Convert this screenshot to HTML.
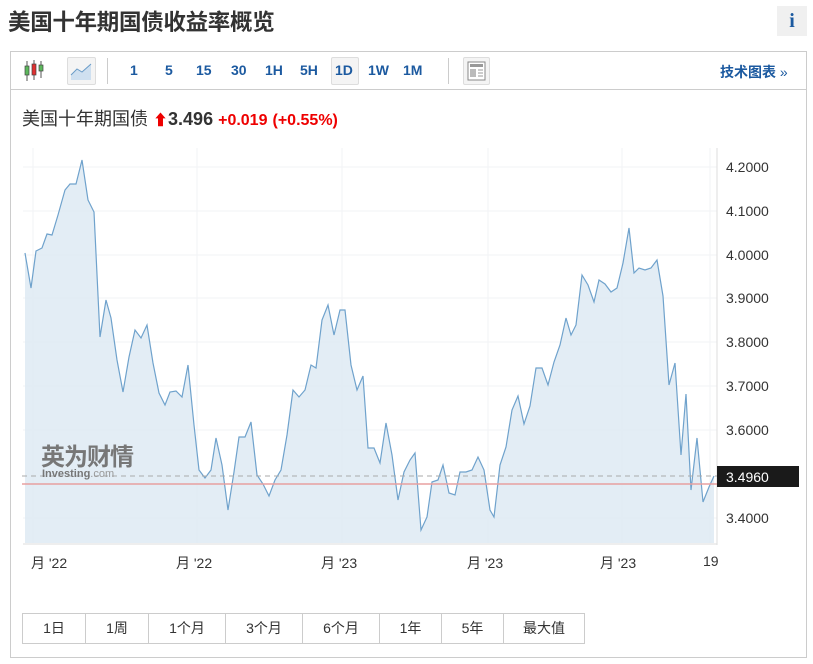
<!DOCTYPE html>
<html><head><meta charset="utf-8"><style>
body{margin:0;width:813px;height:664px;background:#fff;font-family:"Liberation Sans","Noto Sans CJK SC",sans-serif;position:relative;overflow:hidden}
.a{position:absolute}
h1{position:absolute;left:8px;top:5px;margin:0;font-size:22.5px;font-weight:bold;color:#333;letter-spacing:-0.3px}
.info{left:777px;top:6px;width:30px;height:30px;background:#f0f0f0;color:#1c5aa0;font:bold 20px "Liberation Serif",serif;text-align:center;line-height:30px}
.box{left:10px;top:51px;width:795px;height:605px;border:1px solid #ccc}
.tb{left:10px;top:51px;width:797px;height:38px;border-bottom:1px solid #ccc}
.t{font-size:14px;font-weight:bold;color:#1c5aa0;top:62px}
.sel{border:1px solid #ddd;background:#f4f4f4;border-radius:2px}
.btns{left:22px;top:613px;display:flex;border:1px solid #ccc}
.btns div{height:29px;line-height:29px;text-align:center;font-size:14px;color:#333;border-right:1px solid #ccc}
.btns div:last-child{border-right:none}
.yl{left:726px;font-size:14px;color:#333}
.xl{top:553px;font-size:14px;color:#333}
</style></head><body>
<h1>美国十年期国债收益率概览</h1>
<div class="a info">i</div>
<div class="a box"></div>
<div class="a tb"></div>
<svg class="a" style="left:22px;top:58px" width="26" height="26"><line x1="5" y1="3" x2="5" y2="23" stroke="#555"/><rect x="3" y="8" width="4" height="9" fill="#5cb85c" stroke="#444" stroke-width=".7"/><line x1="12" y1="2" x2="12" y2="22" stroke="#555"/><rect x="10" y="6" width="4" height="11" fill="#e03030" stroke="#444" stroke-width=".7"/><line x1="19" y1="3" x2="19" y2="20" stroke="#555"/><rect x="17" y="7" width="4" height="6" fill="#5cb85c" stroke="#444" stroke-width=".7"/></svg>
<div class="a sel" style="left:67px;top:57px;width:27px;height:26px"><svg width="27" height="26"><path d="M3 22 L3 17 L9 11 L14 14 L23 6 L23 22Z" fill="#cfe0f0"/><path d="M3 17 L9 11 L14 14 L23 6" stroke="#6a9cc8" fill="none"/></svg></div>
<div class="a" style="left:107px;top:58px;width:1px;height:26px;background:#ccc"></div>
<div class="a t" style="left:130px">1</div>
<div class="a t" style="left:165px">5</div>
<div class="a t" style="left:196px">15</div>
<div class="a t" style="left:231px">30</div>
<div class="a t" style="left:265px">1H</div>
<div class="a t" style="left:300px">5H</div>
<div class="a sel" style="left:331px;top:57px;width:26px;height:26px"></div>
<div class="a t" style="left:335px">1D</div>
<div class="a t" style="left:368px">1W</div>
<div class="a t" style="left:403px">1M</div>
<div class="a" style="left:448px;top:58px;width:1px;height:26px;background:#ccc"></div>
<div class="a sel" style="left:463px;top:57px;width:25px;height:26px"><svg width="25" height="26"><rect x="4" y="4" width="17" height="18" fill="#fff" stroke="#888"/><rect x="6" y="6" width="13" height="3" fill="#999"/><rect x="6" y="11" width="6" height="8" fill="#bbb"/><line x1="14" y1="12" x2="19" y2="12" stroke="#999"/><line x1="14" y1="15" x2="19" y2="15" stroke="#999"/><line x1="14" y1="18" x2="19" y2="18" stroke="#999"/></svg></div>
<div class="a t" style="left:720px;top:62px;font-size:14px">技术图表 <span style="font-weight:normal">»</span></div>
<div class="a" style="left:22px;top:105px;font-size:18px;color:#333">美国十年期国债 <span style="color:#e00;font-size:15px">&#x2B06;</span><b style="font-size:18px">3.496</b> <b style="color:#e00;font-size:16px">+0.019</b> <span style="color:#e00;font-weight:bold;font-size:16px">(+0.55%)</span></div>
<svg class="a" style="left:0;top:0" width="813" height="600">
<g stroke="#f2f3f5"><line x1="23" y1="167" x2="717" y2="167"/><line x1="23" y1="211" x2="717" y2="211"/><line x1="23" y1="255" x2="717" y2="255"/><line x1="23" y1="298" x2="717" y2="298"/><line x1="23" y1="342" x2="717" y2="342"/><line x1="23" y1="386" x2="717" y2="386"/><line x1="23" y1="430" x2="717" y2="430"/><line x1="23" y1="518" x2="717" y2="518"/>
<line x1="33" y1="148" x2="33" y2="543"/><line x1="197" y1="148" x2="197" y2="543"/><line x1="342" y1="148" x2="342" y2="543"/><line x1="488" y1="148" x2="488" y2="543"/><line x1="622" y1="148" x2="622" y2="543"/><line x1="710" y1="148" x2="710" y2="543"/></g>
<line x1="717" y1="148" x2="717" y2="545" stroke="#ddd"/>
<line x1="23" y1="544" x2="717" y2="544" stroke="#ddd"/>
<path d="M25 253L31 288L36 251L42 248L47 234L52 235L58 215L65 190L70 184L76 184L82 160L88 200L94 212L100 337L106 300L111 318L117 360L123 392L129 357L135 330L141 338L147 325L153 363L159 393L165 405L170 392L176 391L182 397L188 365L194 425L199 470L205 478L211 470L216 438L222 465L228 510L234 472L239 437L245 437L251 422L257 475L263 484L269 496L275 480L281 470L287 435L293 390L299 397L305 390L311 365L316 368L322 320L328 305L334 335L340 310L345 310L351 365L357 390L363 376L368 448L374 448L380 463L386 423L392 455L398 500L404 472L410 460L415 453L421 530L427 517L432 482L438 480L443 465L449 493L455 495L460 472L466 472L472 470L478 457L484 470L490 510L494 517L500 465L506 447L512 410L518 396L524 424L530 406L536 368L542 368L548 385L554 362L560 345L566 318L571 335L576 325L582 275L588 285L594 302L599 280L605 284L611 292L617 288L623 263L629 228L634 273L639 268L645 270L651 268L657 260L663 296L669 385L675 363L681 455L686 394L691 490L697 438L703 502L709 487L714 476L714 543L25 543Z" fill="#dce8f3" fill-opacity=".8"/>
<path d="M25 253L31 288L36 251L42 248L47 234L52 235L58 215L65 190L70 184L76 184L82 160L88 200L94 212L100 337L106 300L111 318L117 360L123 392L129 357L135 330L141 338L147 325L153 363L159 393L165 405L170 392L176 391L182 397L188 365L194 425L199 470L205 478L211 470L216 438L222 465L228 510L234 472L239 437L245 437L251 422L257 475L263 484L269 496L275 480L281 470L287 435L293 390L299 397L305 390L311 365L316 368L322 320L328 305L334 335L340 310L345 310L351 365L357 390L363 376L368 448L374 448L380 463L386 423L392 455L398 500L404 472L410 460L415 453L421 530L427 517L432 482L438 480L443 465L449 493L455 495L460 472L466 472L472 470L478 457L484 470L490 510L494 517L500 465L506 447L512 410L518 396L524 424L530 406L536 368L542 368L548 385L554 362L560 345L566 318L571 335L576 325L582 275L588 285L594 302L599 280L605 284L611 292L617 288L623 263L629 228L634 273L639 268L645 270L651 268L657 260L663 296L669 385L675 363L681 455L686 394L691 490L697 438L703 502L709 487L714 476" fill="none" stroke="#6fa2cc" stroke-width="1.2"/>
<line x1="22" y1="484" x2="717" y2="484" stroke="#e8a0a0" stroke-width="1.5"/>
<line x1="22" y1="476" x2="717" y2="476" stroke="#aaa" stroke-dasharray="5,4"/>
<rect x="717" y="466" width="82" height="21" fill="#1a1a1a"/>
<text x="726" y="482" font-size="14" fill="#fff" font-family="Liberation Sans">3.4960</text>
<text x="41" y="465" font-size="24" font-weight="bold" fill="#777" font-family="Liberation Sans,Noto Sans CJK SC,sans-serif" letter-spacing="-1">英为财情</text>
<text x="42" y="477" font-size="11" font-weight="bold" fill="#777" font-family="Liberation Sans">Investing<tspan font-weight="normal" fill="#999">.com</tspan></text>
</svg>
<div class="a yl" style="top:159px">4.2000</div>
<div class="a yl" style="top:203px">4.1000</div>
<div class="a yl" style="top:247px">4.0000</div>
<div class="a yl" style="top:290px">3.9000</div>
<div class="a yl" style="top:334px">3.8000</div>
<div class="a yl" style="top:378px">3.7000</div>
<div class="a yl" style="top:422px">3.6000</div>
<div class="a yl" style="top:510px">3.4000</div>
<div class="a xl" style="left:31px">月 '22</div>
<div class="a xl" style="left:176px">月 '22</div>
<div class="a xl" style="left:321px">月 '23</div>
<div class="a xl" style="left:467px">月 '23</div>
<div class="a xl" style="left:600px">月 '23</div>
<div class="a xl" style="left:703px">19</div>
<div class="a btns"><div style="width:62px">1日</div><div style="width:62px">1周</div><div style="width:76px">1个月</div><div style="width:76px">3个月</div><div style="width:76px">6个月</div><div style="width:61px">1年</div><div style="width:61px">5年</div><div style="width:80px">最大值</div></div>
</body></html>
